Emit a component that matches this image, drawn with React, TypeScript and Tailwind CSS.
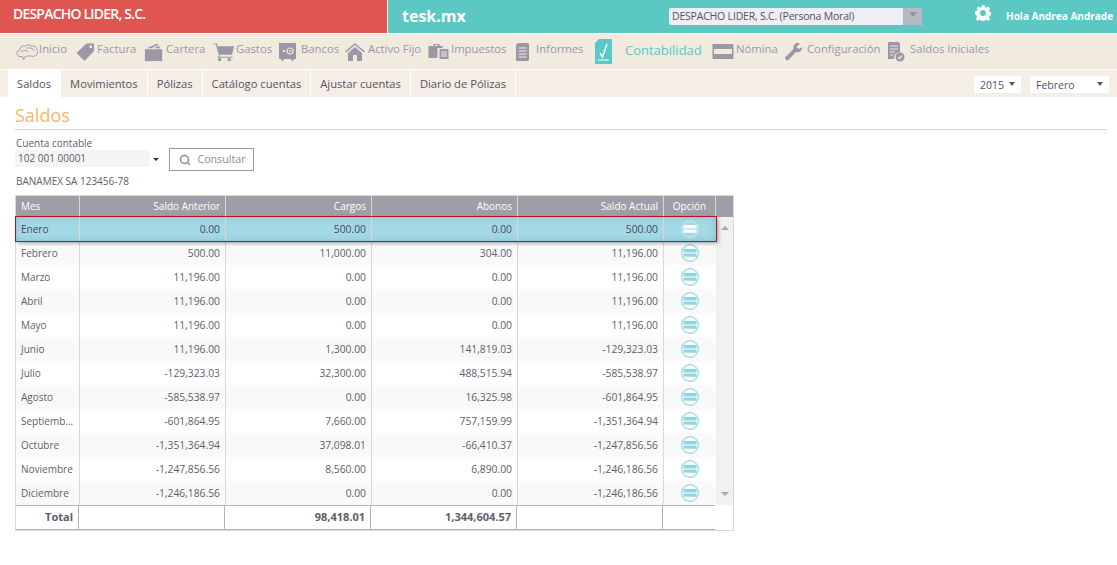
import { Search } from "lucide-react";

const F = "#9a98a6";

const icons: Record<string, React.ReactNode> = {
  cloud: (
    <svg width="23" height="20" viewBox="0 0 24 20" fill="none" stroke={F} strokeWidth="1">
      <path d="M5 15c-3 0-4-2-4-4 0-2 2-3 3-3 0-3 3-5 6-4 1-2 5-2 6 0 3-1 6 1 6 4 1 1 1 5-2 6-2 1-5 0-6 0-2 0-4 1-5 1l-1 3-1-3z" />
      <path d="M5 10c2-2 6-2 8 0M11 6c3-1 7 0 8 3" />
    </svg>
  ),
  tag: (
    <svg width="19" height="20" viewBox="0 0 20 20" fill={F}>
      <path d="M11 1h8v8L9 19.500 0.500 11z" />
      <circle cx="15.500" cy="4.500" r="1.500" fill="#f1eadf" />
    </svg>
  ),
  wallet: (
    <svg width="20" height="20" viewBox="0 0 22 20" fill={F}>
      <path d="M3 6 14 1l2 1-8 4zM11 6l5-3 2 3z" />
      <path d="M1 7h19v13H1z" />
    </svg>
  ),
  cart: (
    <svg width="21" height="20" viewBox="0 0 22 20" fill={F}>
      <path d="M0 1h4l1 3h17l-2 9H7l-.500 2h14v1H5l1-3L3 2H0z" />
      <circle cx="7" cy="18" r="1.800" />
      <circle cx="17" cy="18" r="1.800" />
    </svg>
  ),
  safe: (
    <svg width="18" height="20" viewBox="0 0 18 20" fill={F}>
      <path d="M0 1h17v16H0zM2 17h3v1.500H2zM12 17h3v1.500h-3z" />
      <circle cx="11" cy="9" r="3" fill="none" stroke="#f1eadf" strokeWidth="1.200" />
      <circle cx="11" cy="9" r="1" fill="#f1eadf" />
      <path d="M4 8h2v2H4z" fill="#f1eadf" />
    </svg>
  ),
  home: (
    <svg width="20" height="20" viewBox="0 0 20 20" fill={F}>
      <path d="M10 1 20 9.500l-1 1L10 3 1 10.500l-1-1z" />
      <path d="M10 5l7 6v8h-5v-6H8v6H3v-8z" />
    </svg>
  ),
  cases: (
    <svg width="21" height="20" viewBox="0 0 20 20" fill={F}>
      <path d="M5 2h6v2h3v2H9v10H0V4h5zM6.500 3v1h3V3z" />
      <path d="M11 7h9v10h-9z" />
      <path d="M12.500 10h6M12.500 12h6M12.500 14h6" stroke="#f1eadf" strokeWidth="1" />
    </svg>
  ),
  doc: (
    <svg width="13" height="20" viewBox="0 0 13 20" fill={F}>
      <path d="M2 1h10l1 1v16l-1 1H1l-1-1V3z" />
      <path d="M2.500 6h8M2.500 9h8M2.500 12h8M2.500 15h8" stroke="#f1eadf" strokeWidth="1" />
    </svg>
  ),
  ledger: (
    <svg width="17" height="25" viewBox="0 0 17 25">
      <path d="M4 0h13v25H0V4z" fill="#5bc8c4" />
      <path d="M3 21h11" stroke="#fff" strokeWidth="1" />
      <path d="M5 14l2.500 4L12 5" fill="none" stroke="#fff" strokeWidth="1.500" />
    </svg>
  ),
  card: (
    <svg width="22" height="15" viewBox="0 0 21 15" fill={F}>
      <path d="M0 0h21v15H0z" />
      <path d="M1.500 5h18v5h-18z" fill="#f1eadf" />
    </svg>
  ),
  wrench: (
    <svg width="18" height="20" viewBox="0 0 18 20" fill={F}>
      <path d="M12 1c-3 1-4 3-3.500 6L0 15.500c-.500 1 1.500 3.500 3 3L11 10c3 1 6-1 6.500-5L14 7l-2.500-2L15 1.500c-1-.500-2-.500-3-.500z" />
    </svg>
  ),
  check: (
    <svg width="18" height="20" viewBox="0 0 18 20" fill={F}>
      <path d="M2 0h10l1 2v8a6 6 0 0 0-6 7H1V1z" />
      <path d="M3 4h8M3 7h8M3 10h5M3 13h3" stroke="#f1eadf" strokeWidth="1" />
      <circle cx="13" cy="15" r="4.500" />
      <path d="M11 15l1.500 1.500L15 13.500" stroke="#f1eadf" fill="none" strokeWidth="1.200" />
    </svg>
  ),
};

const nav = [
  { icon: "cloud", label: "Inicio", cls: "w-[60px] gap-0" },
  { icon: "tag", label: "Factura", cls: "w-[68px] gap-[2px]" },
  { icon: "wallet", label: "Cartera", cls: "w-[69px] gap-[2px]" },
  { icon: "cart", label: "Gastos", cls: "w-[66px] gap-[2px]" },
  { icon: "safe", label: "Bancos", cls: "w-[66px] gap-[4px]" },
  { icon: "home", label: "Activo Fijo", cls: "w-[83px] gap-[3px]" },
  { icon: "cases", label: "Impuestos", cls: "w-[88px] gap-[2px]" },
  { icon: "doc", label: "Informes", cls: "w-[79px] gap-[7px]" },
];

const tabs = [
  { label: "Saldos", active: true },
  { label: "Movimientos" },
  { label: "Pólizas" },
  { label: "Catálogo cuentas" },
  { label: "Ajustar cuentas" },
  { label: "Diario de Pólizas" },
];

const rows = [
  ["Enero", "0.00", "500.00", "0.00", "500.00"],
  ["Febrero", "500.00", "11,000.00", "304.00", "11,196.00"],
  ["Marzo", "11,196.00", "0.00", "0.00", "11,196.00"],
  ["Abril", "11,196.00", "0.00", "0.00", "11,196.00"],
  ["Mayo", "11,196.00", "0.00", "0.00", "11,196.00"],
  ["Junio", "11,196.00", "1,300.00", "141,819.03", "-129,323.03"],
  ["Julio", "-129,323.03", "32,300.00", "488,515.94", "-585,538.97"],
  ["Agosto", "-585,538.97", "0.00", "16,325.98", "-601,864.95"],
  ["Septiemb...", "-601,864.95", "7,660.00", "757,159.99", "-1,351,364.94"],
  ["Octubre", "-1,351,364.94", "37,098.01", "-66,410.37", "-1,247,856.56"],
  ["Noviembre", "-1,247,856.56", "8,560.00", "6,890.00", "-1,246,186.56"],
  ["Diciembre", "-1,246,186.56", "0.00", "0.00", "-1,246,186.56"],
];

const OptionIcon = ({ selected }: { selected?: boolean }) => (
  <svg width="18" height="18" viewBox="0 0 18 18">
    <circle cx="9" cy="9" r="8.300" fill={selected ? "#a3d9e6" : "#fff"} stroke={selected ? "#c4e9ef" : "#8fd6e0"} strokeWidth="1.200" />
    <path d="M2.500 5h13v3.400h-13zM2.500 9.400h13v3.400h-13z" fill={selected ? "#fff" : "#8fd6e0"} />
  </svg>
);

const cols = "grid grid-cols-[64px_146px_146px_146px_146px_52px]";
const totalCols = "grid grid-cols-[63px_146px_146px_146px_146px_52px]";

export default function App() {
  return (
    <div className="min-h-[565px] bg-white font-['Open_Sans',sans-serif] text-[10.300px] text-[#605e6a]">
      <header className="flex h-[34px] border-b border-white">
        <div className="flex w-[387px] items-center bg-[#df5651] pb-[7px] pl-[13px] text-[14px] font-semibold tracking-[-0.8px] text-white">
          DESPACHO LIDER, S.C.
        </div>
        <div className="flex flex-1 items-center border-l border-white bg-[#5bc8c4] pl-[14px] text-white">
          <span className="w-[267px] pb-0.5 text-[16px] font-bold">tesk.mx</span>
          <div className="flex h-[17px] w-[253px] items-center justify-between rounded-[2px] bg-[#eeeef3] pl-[3px] text-[10.500px] tracking-[-0.2px] text-[#55535f]">
            DESPACHO LIDER, S.C. (Persona Moral)
            <span className="flex h-full w-[19px] justify-center rounded-r-[2px] bg-[#b3b9c6] pt-[4px]">
              <span className="h-0 w-0 border-x-[4px] border-t-[5px] border-x-transparent border-t-[#8f93a0]" />
            </span>
          </div>
          <svg className="mb-[7px] ml-[53px]" width="16" height="16" viewBox="0 0 16 16" fill="#fff">
            <path
              fillRule="evenodd"
              d="M6.500 0h3l.400 2.200 1.400.600L13.200 1.500l2 2-1.300 1.900.600 1.400 2.200.400v3l-2.200.400-.600 1.400 1.300 1.900-2 2-1.900-1.300-1.400.600-.400 2.200h-3l-.400-2.200-1.400-.600-1.900 1.300-2-2 1.300-1.900-.600-1.400L0 9.200v-3l2.200-.400.600-1.400L1.500 3.500l2-2 1.900 1.300 1.400-.600zM8 5a3 3 0 1 0 0 6 3 3 0 0 0 0-6z"
            />
          </svg>
          <span className="ml-[15px] text-[10px] font-bold whitespace-nowrap">Hola Andrea Andrade</span>
        </div>
      </header>

      <nav className="flex h-[36px] items-center border-b border-white bg-[#f1eadf] pl-[16px] text-[11.300px] text-[#9a98a6]">
        {nav.map((n) => (
          <a key={n.label} className={`flex shrink-0 items-center whitespace-nowrap ${n.cls}`}>
            {icons[n.icon]}
            <span className="pb-[4px]">{n.label}</span>
          </a>
        ))}
        <a className="flex w-[117px] shrink-0 items-center gap-[13px] text-[13px] text-[#5bc8c4]">
          {icons.ledger}
          <span className="pb-0.5">Contabilidad</span>
        </a>
        <a className="flex w-[73px] shrink-0 items-center gap-[2px] whitespace-nowrap">
          {icons.card}
          <span className="pb-[4px]">Nómina</span>
        </a>
        <a className="flex w-[102px] shrink-0 items-center gap-[4px] whitespace-nowrap">
          {icons.wrench}
          <span className="pb-[4px]">Configuración</span>
        </a>
        <a className="flex items-center gap-[5px] whitespace-nowrap">
          {icons.check}
          <span className="pb-[4px]">Saldos Iniciales</span>
        </a>
      </nav>

      <div className="flex h-[27px] items-end bg-[#f4eee6] pl-[8px] pr-[8px] text-[#55535f]">
        {tabs.map((t) => (
          <a
            key={t.label}
            className={`flex h-[27px] items-center border-r border-white px-[9px] pt-[2px] text-[11.200px] ${t.active ? "bg-white" : ""}`}
          >
            {t.label}
          </a>
        ))}
        <div className="ml-auto flex h-full items-start gap-[9px] pt-[6px] text-[10.500px]">
          <div className="flex h-[17px] w-[47px] items-center justify-between bg-white px-[6px] pt-[2px]">
            2015
            <span className="mb-[3px] h-0 w-0 border-x-[3px] border-t-[4px] border-x-transparent border-t-[#55535f]" />
          </div>
          <div className="flex h-[17px] w-[79px] items-center justify-between bg-white px-[6px] pt-[2px]">
            Febrero
            <span className="mb-[3px] h-0 w-0 border-x-[3px] border-t-[4px] border-x-transparent border-t-[#55535f]" />
          </div>
        </div>
      </div>

      <main className="pl-[15px] pr-[10px]">
        <h1 className="mt-[6px] border-b border-[#d4d4d4] pb-[2px] text-[18px] leading-[24px] text-[#fbb36b]">Saldos</h1>
        <div className="ml-px mt-[6px] text-[10px] leading-[14px]">Cuenta contable</div>
        <div className="flex h-[18px] items-start">
          <div className="h-[17px] w-[135px] bg-[#f4f4f4] pl-[3px] text-[10px] leading-[16px]">102 001 00001</div>
          <span className="ml-[3px] mt-[8px] h-0 w-0 border-x-[3px] border-t-[3px] border-x-transparent border-t-[#333]" />
          <button className="-mt-[2px] ml-[10px] flex h-[23px] w-[85px] shrink-0 items-center justify-center gap-[6px] border border-[#9a98a6] pl-[2px] text-[10.700px] text-[#8d8b96]">
            <Search size={12} strokeWidth={3} />
            Consultar
          </button>
        </div>
        <div className="ml-px mt-[6px] text-[10px] leading-[14px]">BANAMEX SA 123456-78</div>

        <div className="mt-[7px] w-[719px] border border-[#d8d8d8]">
          <div className={`${cols} h-[21px] w-[717px] bg-[#9f9da8] pr-[17px] text-[10px] text-white`}>
            {["Mes", "Saldo Anterior", "Cargos", "Abonos", "Saldo Actual", "Opción"].map((h, i) => (
              <div
                key={h}
                className={`flex items-center border-r border-[#d8d8d8] px-[5px] ${i === 0 ? "" : i === 5 ? "justify-center" : "justify-end"}`}
              >
                {h}
              </div>
            ))}
          </div>
          <div className="flex">
            <div className="w-[700px]">
              {rows.map((r, i) => (
                <div
                  key={r[0]}
                  className={`${cols} h-[24px] ${
                    i === 0
                      ? "relative bg-[#a3d9e6] text-[#4a4852] outline outline-[1.500px] outline-[#b5161c] shadow-[inset_0_0_6px_rgba(60,90,110,0.25),2px_2px_4px_rgba(0,0,0,0.4)]"
                      : i % 2 === 1
                        ? "bg-[#f9f9f9]"
                        : "bg-white"
                  }`}
                >
                  {r.map((c, j) => (
                    <div
                      key={j}
                      className={`flex items-center border-r border-[#d8d8d8] px-[5px] pt-px ${j === 0 ? "text-[10px]" : "justify-end"}`}
                    >
                      {c}
                    </div>
                  ))}
                  <div className="flex items-center justify-center">
                    <OptionIcon selected={i === 0} />
                  </div>
                </div>
              ))}
            </div>
            <div className="flex w-[17px] flex-col items-center justify-between bg-[#f1f1f1] py-[9px]">
              <span className="h-0 w-0 border-x-[4px] border-b-[4px] border-x-transparent border-b-[#a8a8a8]" />
              <span className="h-0 w-0 border-x-[4px] border-t-[4px] border-x-transparent border-t-[#a8a8a8]" />
            </div>
          </div>
          <div className={`${totalCols} h-[25px] w-[699px] border-y border-[#b4b4b4] text-[11px] font-bold`}>
            <div className="flex items-center justify-end border-r-[1.500px] border-[#b4b4b4] px-[5px]">Total</div>
            <div className="border-r-[1.500px] border-[#b4b4b4]" />
            <div className="flex items-center justify-end border-r-[1.500px] border-[#b4b4b4] px-[5px]">98,418.01</div>
            <div className="flex items-center justify-end border-r-[1.500px] border-[#b4b4b4] px-[5px]">1,344,604.57</div>
            <div className="border-r-[1.500px] border-[#b4b4b4]" />
            <div />
          </div>
        </div>
      </main>
    </div>
  );
}
